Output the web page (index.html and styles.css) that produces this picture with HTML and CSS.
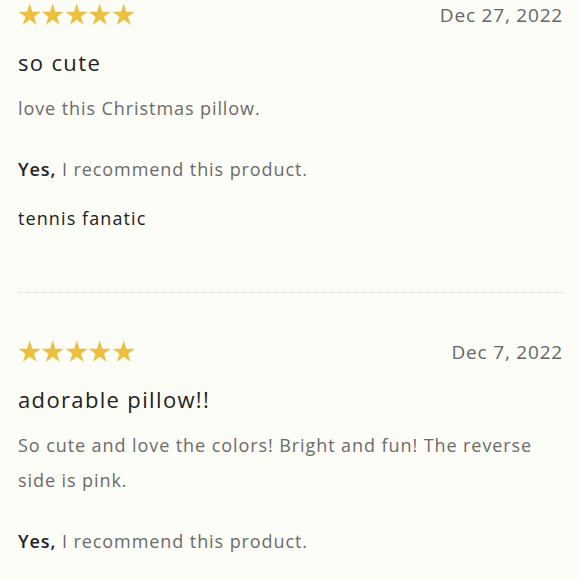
FILE: index.html
```html
<!DOCTYPE html>
<html>
<head>
<meta charset="utf-8">
<link rel="stylesheet" href="styles.css">
</head>
<body>
<svg class="defs" width="0" height="0">
  <defs>
    <symbol id="star" viewBox="0 0 24 24">
      <path d="M12 .6L14.69 8.89L23.41 8.89L16.36 14.02L19.05 22.31L12 17.18L4.95 22.31L7.64 14.02L.59 8.89L9.31 8.89Z" fill="#ecbf3c"/>
    </symbol>
  </defs>
</svg>
<main class="reviews">
  <article class="review">
    <div class="head">
      <div class="stars">
        <svg class="star"><use href="#star"/></svg><svg class="star"><use href="#star"/></svg><svg class="star"><use href="#star"/></svg><svg class="star"><use href="#star"/></svg><svg class="star"><use href="#star"/></svg>
      </div>
      <span class="date">Dec 27, 2022</span>
    </div>
    <h3 class="title">so cute</h3>
    <p class="body">love this Christmas pillow.</p>
    <p class="rec"><b>Yes,</b> I recommend this product.</p>
    <p class="author">tennis fanatic</p>
  </article>
  <article class="review">
    <div class="head">
      <div class="stars">
        <svg class="star"><use href="#star"/></svg><svg class="star"><use href="#star"/></svg><svg class="star"><use href="#star"/></svg><svg class="star"><use href="#star"/></svg><svg class="star"><use href="#star"/></svg>
      </div>
      <span class="date">Dec 7, 2022</span>
    </div>
    <h3 class="title">adorable pillow!!</h3>
    <p class="body">So cute and love the colors! Bright and fun! The reverse side is pink.</p>
    <p class="rec"><b>Yes,</b> I recommend this product.</p>
  </article>
</main>
</body>
</html>
```
FILE: styles.css
```css
html, body {
  margin: 0;
  padding: 0;
  background: #fdfdf8;
}
body {
  font-family: "Open Sans", "Lato", sans-serif;
  color: #222;
  overflow: hidden;
  height: 579px;
}
.defs {
  position: absolute;
}
.reviews {
  padding: 0 17px 0 18px;
  margin-top: -14px;
}
.review {
  padding-top: 14px;
  padding-bottom: 56px;
}
.review + .review {
  border-top: 1px dotted #d6d6d2;
  padding-top: 44px;
}
.head {
  display: flex;
  justify-content: space-between;
  align-items: center;
  height: 30px;
}
.stars {
  display: flex;
}
.star {
  width: 23.4px;
  height: 23.4px;
}
.date {
  font-size: 19px;
  color: #666;
  letter-spacing: 0.8px;
}
.title {
  font-size: 22px;
  font-weight: 400;
  letter-spacing: 1.35px;
  margin: 17px 0 0;
  line-height: 30px;
}
.body {
  font-size: 18px;
  color: #6b6b6b;
  letter-spacing: 0.92px;
  line-height: 35px;
  margin: 14px 0 0;
}
.rec {
  font-size: 18px;
  color: #6b6b6b;
  letter-spacing: 0.92px;
  line-height: 35px;
  margin: 26px 0 0;
}
.rec b {
  color: #222;
  font-weight: 600;
}
.author {
  font-size: 18px;
  letter-spacing: 1.1px;
  line-height: 35px;
  margin: 14px 0 0;
}
```
